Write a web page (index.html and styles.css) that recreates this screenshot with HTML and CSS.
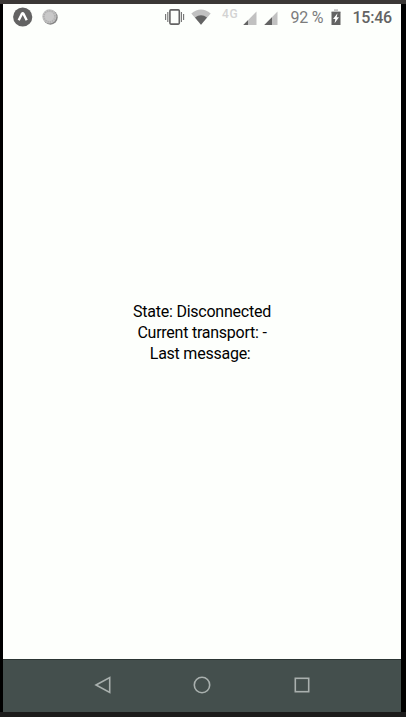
FILE: index.html
```html
<!DOCTYPE html>
<html lang="en">
<head>
<meta charset="utf-8">
<title>Connection state</title>
<link rel="stylesheet" href="styles.css">
</head>
<body>
<div class="frame">
  <div class="screen">
    <header class="status">
      <svg class="app" width="20" height="20" viewBox="0 0 20 20"><circle cx="9.7" cy="10" r="9.6" fill="#636363"/><path d="M5.7 13.2 9 6.6Q9.7 5.6 10.4 6.6L13.7 13.2" fill="none" stroke="#fff" stroke-width="2.4"/></svg>
      <svg class="sync" width="16" height="16" viewBox="0 0 16 16"><circle cx="8.4" cy="8.4" r="7.3" fill="#858585"/><circle cx="7.4" cy="7.4" r="7.1" fill="#c1c1c1"/><circle cx="7.4" cy="7.4" r="5.5" fill="none" stroke="#adadad" stroke-width="1.6" stroke-dasharray="1 1.3"/><circle cx="7.4" cy="7.4" r="4.5" fill="#c9c9c9"/></svg>
      <svg class="vibrate" width="20" height="18" viewBox="0 0 20 18"><rect x="4.9" y="1.9" width="9.4" height="14.2" rx="1" fill="none" stroke="#636363" stroke-width="1.6"/><path d="M.6 6v6M2.8 4v10M16.4 4v10M18.6 6v6" stroke="#737373" stroke-width="1.1"/></svg>
      <svg class="wifi" width="20" height="16" viewBox="0 0 20 16"><path d="M.3 4.6Q10-3.4 19.7 4.6L10 15.7Z" fill="#c1c1c1"/><path d="M4 8.5Q10 3.8 16 8.5L10 15.7Z" fill="#636363"/></svg>
      <span class="network">4G</span>
      <svg class="signal" width="14" height="14" viewBox="0 0 14 14"><path d="M.3 14H13.5V.5Z" fill="#c1c1c1"/><path d="M.3 14H5V9.2Z" fill="#636363"/></svg>
      <svg class="signal second" width="14" height="14" viewBox="0 0 14 14"><path d="M.3 14H13.5V.5Z" fill="#c1c1c1"/><path d="M.3 14H8V6.2Z" fill="#636363"/></svg>
      <span class="percent">92 %</span>
      <svg class="battery" width="10" height="17" viewBox="0 0 10 17"><path d="M3 .3h4v1.6h2.5V4H.5V1.9H3Z" fill="#c1c1c1"/><path d="M.5 3h9v13h-9Z" fill="#636363"/><path d="M6.5 4.3 2 10h2.3l-.7 4.2L8 8.3H5.7Z" fill="#fff"/></svg>
      <time class="clock">15:46</time>
    </header>
    <main class="content">
      <p>State: Disconnected</p>
      <p>Current transport: -</p>
      <p class="message">Last message: </p>
    </main>
    <nav class="navigation">
      <svg width="18" height="18" viewBox="0 0 18 18"><path d="M2 9 15.7 1.5V16.5Z"/></svg>
      <svg width="18" height="18" viewBox="0 0 18 18"><circle cx="9" cy="9" r="7.7"/></svg>
      <svg width="18" height="18" viewBox="0 0 18 18"><rect x="2.3" y="2.3" width="13.4" height="13.4"/></svg>
    </nav>
  </div>
</div>
</body>
</html>
```

FILE: styles.css
```css
* { box-sizing: border-box; }

body {
  margin: 0;
  background: #000;
  font-family: Roboto, sans-serif;
}

.frame {
  width: 406px;
  height: 717px;
  padding: 0 5px 0 3px;
  border-top: 4px solid #3b3836;
  border-bottom: 5px solid #1c1b1b;
}

.screen {
  display: flex;
  flex-direction: column;
  height: 708px;
  background: #fdfffc;
}

.status {
  display: flex;
  align-items: flex-start;
  height: 28px;
  padding-left: 10px;
  color: #636363;
  white-space: nowrap;
}

.status > * { flex: none; }
.app { margin-top: 3px; }
.sync { margin: 5px 0 0 8.5px; }
.vibrate { margin: 4px 0 0 107.5px; }
.wifi { margin: 5px 0 0 6px; }

.network {
  width: 19px;
  margin: 3px 0 0 11px;
  color: #d3d3d3;
  font-size: 12px;
  font-weight: 500;
  letter-spacing: 0.7px;
  line-height: 14px;
}

.signal { margin: 7px 0 0 2px; }
.second { margin-left: 7px; }

.percent {
  width: 34px;
  margin: 5px 0 0 12.5px;
  color: #7c7c7c;
  font-size: 16px;
  letter-spacing: -0.2px;
  line-height: 18px;
}

.battery { margin: 5px 0 0 6.5px; }

.clock {
  margin: 5px 0 0 11.5px;
  font-size: 16px;
  font-weight: 500;
  letter-spacing: -0.25px;
  line-height: 18px;
}

.content {
  display: flex;
  flex: 1;
  flex-direction: column;
  align-items: center;
  justify-content: center;
  padding-bottom: 26px;
  color: #000;
  font-size: 16px;
  letter-spacing: -0.24px;
  line-height: 21px;
}

.content p { margin: 0; }
.content .message { white-space: pre; }

.navigation {
  display: flex;
  align-items: center;
  justify-content: center;
  gap: 81.5px;
  height: 53px;
  padding-bottom: 2px;
  border-top: 1px solid #2b3533;
  background: #444f4d;
}

.navigation svg {
  fill: none;
  stroke: #a9b0ae;
  stroke-width: 1.6;
}
```
